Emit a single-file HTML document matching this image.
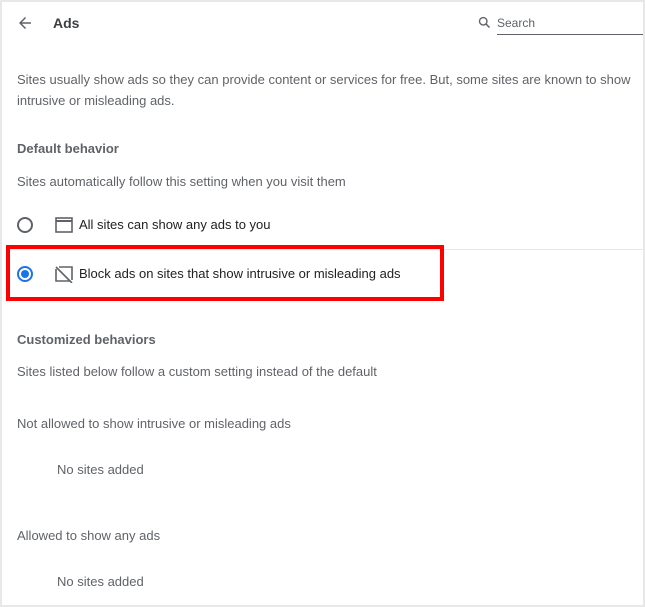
<!DOCTYPE html>
<html><head><style>
body{margin:0;width:645px;height:607px;background:#e8e8e8;font-family:"Liberation Sans",Arial,sans-serif;overflow:hidden}
.pg{position:absolute;left:2px;top:2px;width:641px;height:603px;background:#fff}
.t{position:absolute;font-size:13px;color:#5f6368;white-space:nowrap;line-height:16px}
.h{font-weight:bold;color:#5f6368}
.d{color:#202124}
</style></head><body>
<div class="pg"></div>
<svg style="position:absolute;left:16px;top:14px" width="18" height="18" viewBox="0 0 24 24"><path d="M20 11H7.8l5.6-5.6L12 4l-8 8 8 8 1.4-1.4L7.8 13H20z" fill="#5f6368"/></svg>
<div class="t d" style="left:53px;top:15px;font-size:14px;font-weight:bold;color:#3c4043">Ads</div>
<svg style="position:absolute;left:477px;top:15px" width="15" height="15" viewBox="0 0 24 24"><circle cx="10" cy="10" r="6" fill="none" stroke="#5f6368" stroke-width="2.2"/><path d="M14.5 14.5L20 20" stroke="#5f6368" stroke-width="2.4"/></svg>
<div class="t" style="left:497px;top:15px;font-size:12px">Search</div>
<div style="position:absolute;left:497px;top:34px;width:146px;height:1px;background:#5f6368"></div>
<div class="t" style="left:17px;top:69px;line-height:21px;white-space:normal;width:620px">Sites usually show ads so they can provide content or services for free. But, some sites are known to show intrusive or misleading ads.</div>
<div class="t h" style="left:17px;top:141px">Default behavior</div>
<div class="t" style="left:17px;top:174px">Sites automatically follow this setting when you visit them</div>
<div style="position:absolute;left:17px;top:217px;width:12px;height:12px;border:2px solid #5f6368;border-radius:50%"></div>
<svg style="position:absolute;left:55px;top:217px" width="18" height="16" viewBox="0 0 18 16"><rect x="1" y="1" width="16" height="14" fill="none" stroke="#5f6368" stroke-width="1.6"/><path d="M1 4h16" stroke="#5f6368" stroke-width="2"/></svg>
<div class="t d" style="left:79px;top:217px">All sites can show any ads to you</div>
<div style="position:absolute;left:6px;top:249px;width:637px;height:1px;background:#e8e8e8"></div>
<div style="position:absolute;left:17px;top:266px;width:12px;height:12px;border:2px solid #1a73e8;border-radius:50%"></div>
<div style="position:absolute;left:21px;top:270px;width:8px;height:8px;background:#1a73e8;border-radius:50%"></div>
<svg style="position:absolute;left:55px;top:266px" width="18" height="17" viewBox="0 0 18 17"><path d="M4 1h13v13M15 15H1V3" fill="none" stroke="#5f6368" stroke-width="1.6"/><path d="M1 1l16 16" stroke="#5f6368" stroke-width="1.6"/></svg>
<div class="t d" style="left:79px;top:266px">Block ads on sites that show intrusive or misleading ads</div>
<div style="position:absolute;left:6px;top:245px;width:430px;height:48px;border:4px solid #f00"></div>
<div class="t h" style="left:17px;top:332px">Customized behaviors</div>
<div class="t" style="left:17px;top:364px">Sites listed below follow a custom setting instead of the default</div>
<div class="t" style="left:17px;top:416px">Not allowed to show intrusive or misleading ads</div>
<div class="t" style="left:57px;top:462px">No sites added</div>
<div class="t" style="left:17px;top:528px">Allowed to show any ads</div>
<div class="t" style="left:57px;top:574px">No sites added</div>
</body></html>
